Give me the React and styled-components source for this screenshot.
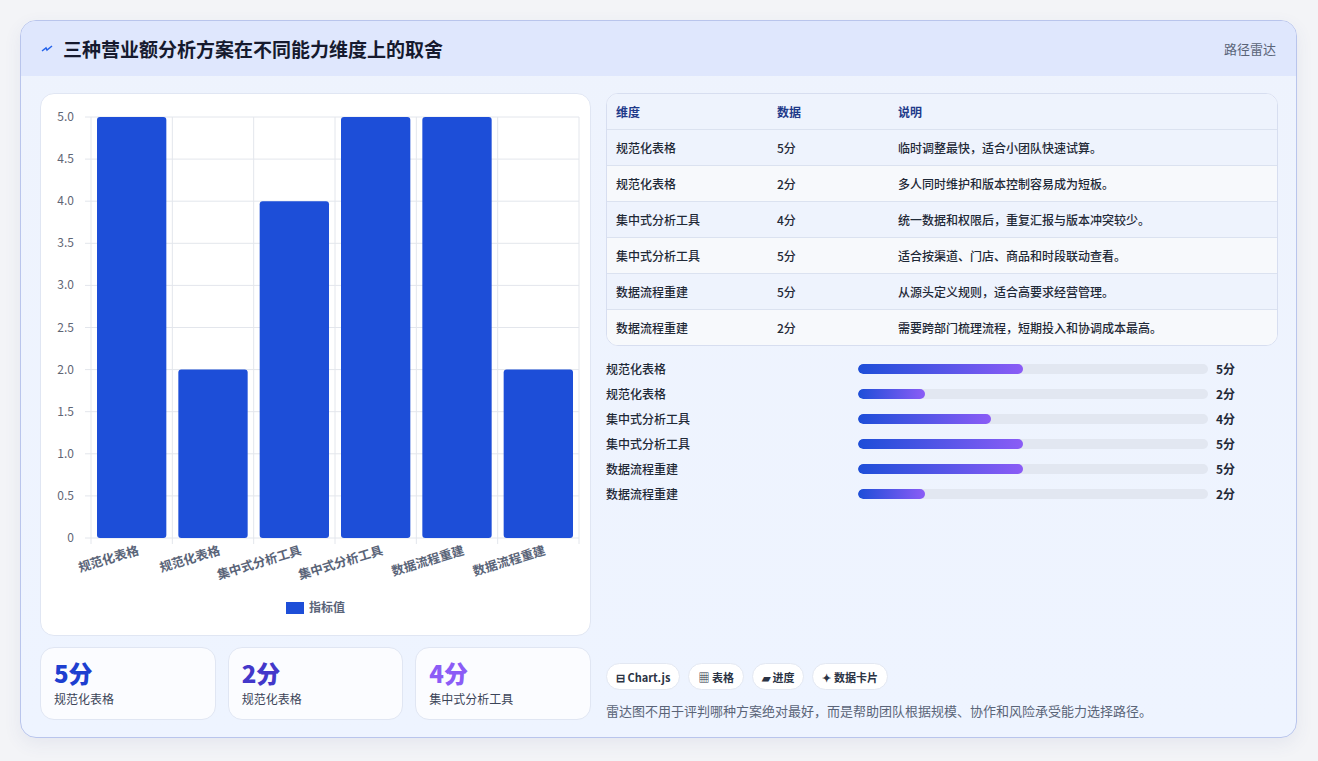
import React from "react";
import styled, { createGlobalStyle } from "styled-components";

const G = createGlobalStyle`
  html,body{margin:0;background:#f3f4f7;font-family:"Noto Sans CJK SC","Noto Sans",sans-serif;}
  #root{padding:20px 21px 21px 20px;}
`;
const Card = styled.div`
  height:718px;box-sizing:border-box;border:1px solid #b9c5ec;border-radius:16px;
  background:linear-gradient(180deg,#eef3fd,#eef4ff);overflow:hidden;display:flex;flex-direction:column;
  box-shadow:0 6px 18px rgba(60,80,140,.08);
`;
const Header = styled.div`
  height:55px;flex:none;background:#dfe7fd;display:flex;align-items:center;justify-content:space-between;padding:0 20px;
`;
const Title = styled.h1`margin:0;font-size:19px;font-weight:700;color:#161a2e;display:flex;align-items:center;gap:10px;`;
const Tag = styled.span`font-size:13px;color:#5a6478;`;
const Body = styled.div`flex:1;display:grid;grid-template-columns:551px 1fr;gap:15px;padding:17px 18px 18px 19px;`;
const Col = styled.div`display:flex;flex-direction:column;gap:11px;min-height:0;`;
const Panel = styled.div`height:543px;box-sizing:border-box;background:#fff;border:1px solid #e0e6f3;border-radius:14px;`;
const Stats = styled.div`display:grid;grid-template-columns:repeat(3,1fr);gap:12px;`;
const Stat = styled.div`height:73px;box-sizing:border-box;background:#fbfcff;border:1px solid #e0e6f3;border-radius:14px;padding:10px 13px;`;
const Big = styled.div`font-size:24px;font-weight:800;color:${p=>p.c};line-height:30px;`;
const Small = styled.div`font-size:12px;color:#3b4458;margin-top:2px;`;
const Table = styled.div`border:1px solid #d7def0;border-radius:12px;overflow:hidden;background:#fff;`;
const Row = styled.div`display:grid;grid-template-columns:161px 121px 1fr;height:35px;align-items:center;padding:0 9px;
  font-size:12px;color:${p=>p.h?"#1e3a8a":"#1f2937"};font-weight:${p=>p.h?700:500};
  background:${p=>p.h?"#eef3fd":p.alt?"#f7f9fc":"#eef3fd"};border-top:${p=>p.first?"none":"1px solid #dbe2f0"};`;
const Bars = styled.div`display:flex;flex-direction:column;margin-top:10px;`;
const BarRow = styled.div`display:grid;grid-template-columns:252px 350px 1fr;align-items:center;height:25px;font-size:12px;color:#1f2937;font-weight:500;`;
const Track = styled.div`height:10px;border-radius:5px;background:#e2e7f1;overflow:hidden;`;
const Fill = styled.div`height:100%;border-radius:5px;background:linear-gradient(90deg,#1d4ed8,#8b5cf6);`;
const Val = styled.span`padding-left:8px;font-weight:700;`;
const Spacer = styled.div`flex:1;`;
const Chips = styled.div`display:flex;gap:8px;`;
const Chip = styled.span`height:27px;box-sizing:border-box;padding:0 9px;border:1px solid #e3e8f2;background:#fff;border-radius:14px;font-size:11px;font-weight:700;color:#2b3344;display:flex;align-items:center;gap:4px;`;
const Note = styled.p`margin:11px 0 0;font-size:13px;color:#5a6478;`;

const rows=[["规范化表格","5分","临时调整最快，适合小团队快速试算。",5],["规范化表格","2分","多人同时维护和版本控制容易成为短板。",2],["集中式分析工具","4分","统一数据和权限后，重复汇报与版本冲突较少。",4],["集中式分析工具","5分","适合按渠道、门店、商品和时段联动查看。",5],["数据流程重建","5分","从源头定义规则，适合高要求经营管理。",5],["数据流程重建","2分","需要跨部门梳理流程，短期投入和协调成本最高。",2]];

function Chart(){
  const x0=50,x1=538,yT=23,yB=444,cw=(x1-x0)/6;
  const ys=[0,.5,1,1.5,2,2.5,3,3.5,4,4.5,5];
  const Y=v=>yB-(yB-yT)*v/5;
  return <svg width="549" height="541" style={{display:"block"}} fontFamily="Noto Sans CJK SC, sans-serif">
    {ys.map(v=><g key={v}><line x1={x0-6} x2={x1} y1={Y(v)} y2={Y(v)} stroke="#e3e6ec"/>
      <text x={x0-17} y={Y(v)+4} fontSize="12" fill="#5f6675" textAnchor="end">{v===0?"0":v.toFixed(1)}</text></g>)}
    {[0,1,2,3,4,5,6].map(i=><line key={i} x1={x0+i*cw} x2={x0+i*cw} y1={yT} y2={yB+6} stroke="#e3e6ec"/>)}
    {rows.map((r,i)=><g key={i}>
      <rect x={x0+i*cw+6} y={Y(r[3])} width={cw-12} height={yB-Y(r[3])} rx="3" fill="#1d4ed8"/>
      <text transform={`translate(${x0+i*cw+cw/2+8},${yB+16}) rotate(-17)`} fontSize="12.5" fontWeight="700" fill="#5a6478" textAnchor="end">{r[0]}</text>
    </g>)}
    <rect x="245" y="508" width="18" height="12" fill="#1d4ed8"/>
    <text x="268" y="518" fontSize="12" fill="#5a6478" fontWeight="600">指标值</text>
  </svg>;
}

export default function App(){
  return <><G/><Card>
    <Header><Title><svg width="12" height="8" viewBox="0 0 12 8"><path d="M1 6 L5 3 L6 5 L11 1" stroke="#2563eb" strokeWidth="1.5" fill="none"/></svg>三种营业额分析方案在不同能力维度上的取舍</Title><Tag>路径雷达</Tag></Header>
    <Body>
      <Col>
        <Panel><Chart/></Panel>
        <Stats>
          <Stat><Big c="#1d3fd0">5分</Big><Small>规范化表格</Small></Stat>
          <Stat><Big c="#4338ca">2分</Big><Small>规范化表格</Small></Stat>
          <Stat><Big c="#8b5cf6">4分</Big><Small>集中式分析工具</Small></Stat>
        </Stats>
      </Col>
      <Col style={{gap:0}}>
        <Table>
          <Row h first><span>维度</span><span>数据</span><span>说明</span></Row>
          {rows.map((r,i)=><Row key={i} alt={i%2===1}><span>{r[0]}</span><span>{r[1]}</span><span>{r[2]}</span></Row>)}
        </Table>
        <Bars>{rows.map((r,i)=><BarRow key={i}><span>{r[0]}</span><Track><Fill style={{width:(r[3]===5?47:r[3]===4?38:19)+"%"}}/></Track><Val>{r[1]}</Val></BarRow>)}</Bars>
        <Spacer/>
        <Chips><Chip>⊟ Chart.js</Chip><Chip>▦ 表格</Chip><Chip>▰ 进度</Chip><Chip>✦ 数据卡片</Chip></Chips>
        <Note>雷达图不用于评判哪种方案绝对最好，而是帮助团队根据规模、协作和风险承受能力选择路径。</Note>
      </Col>
    </Body>
  </Card></>;
}
